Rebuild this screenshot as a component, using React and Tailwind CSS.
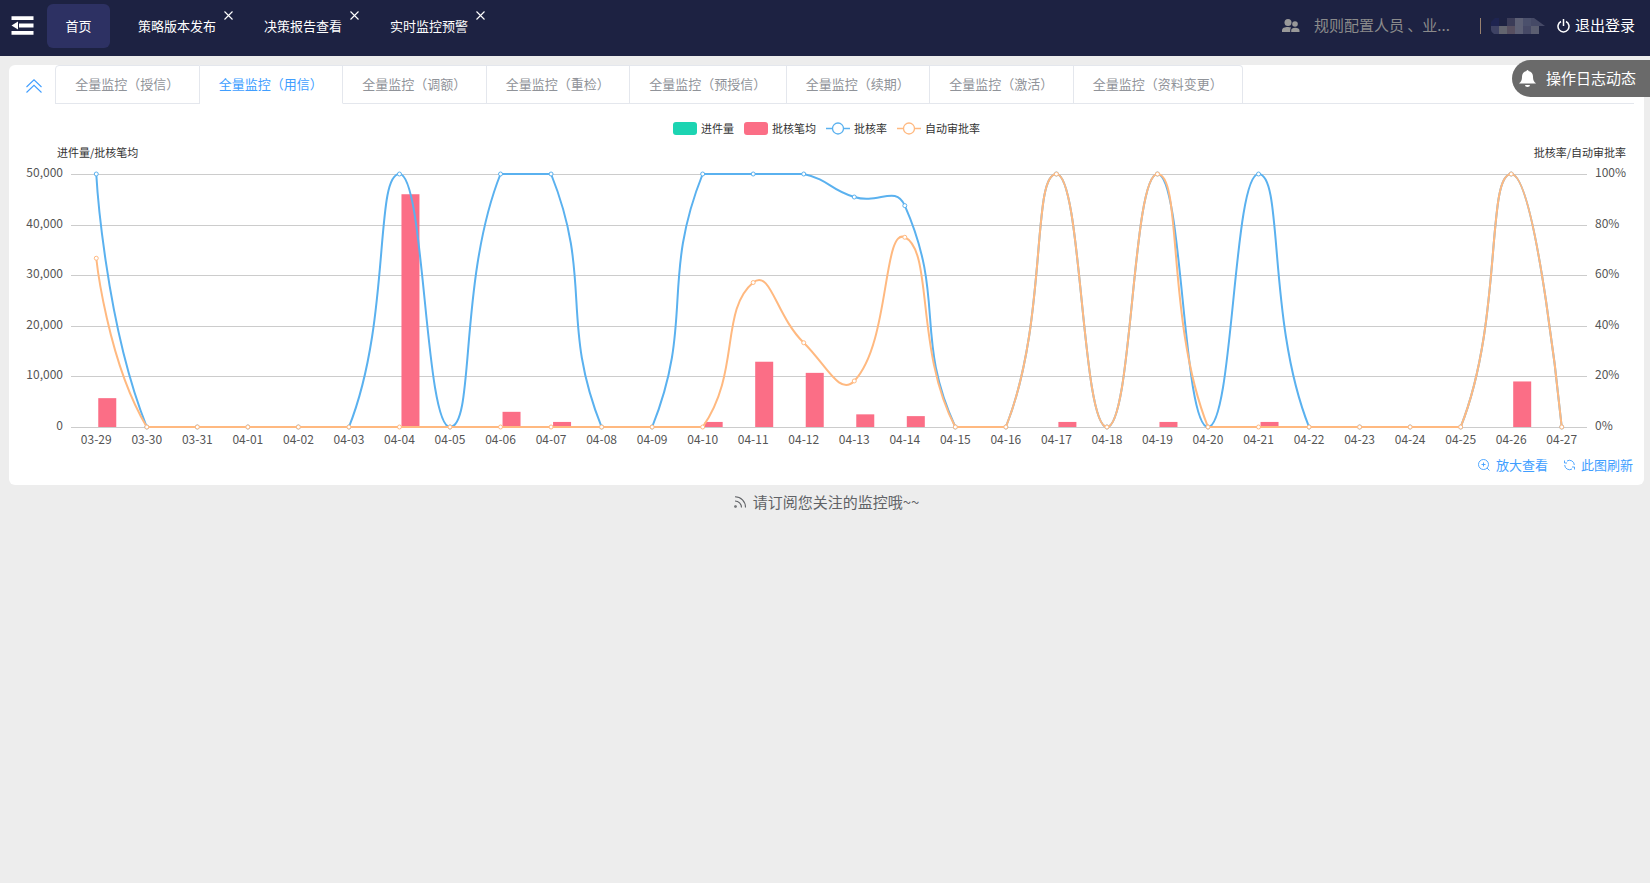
import React, { useLayoutEffect, useRef, useState } from "react";

const openTabs = ["策略版本发布", "决策报告查看", "实时监控预警"];
const monitorTabs = [
  "全量监控（授信）",
  "全量监控（用信）",
  "全量监控（调额）",
  "全量监控（重检）",
  "全量监控（预授信）",
  "全量监控（续期）",
  "全量监控（激活）",
  "全量监控（资料变更）",
];

const dates = [
  "03-29", "03-30", "03-31", "04-01", "04-02", "04-03", "04-04", "04-05", "04-06", "04-07",
  "04-08", "04-09", "04-10", "04-11", "04-12", "04-13", "04-14", "04-15", "04-16", "04-17",
  "04-18", "04-19", "04-20", "04-21", "04-22", "04-23", "04-24", "04-25", "04-26", "04-27",
];
const average = [
  5700, 0, 0, 0, 0, 0, 46000, 0, 3000, 1000,
  0, 0, 1000, 12900, 10700, 2500, 2150, 0, 0, 1000,
  0, 1000, 0, 1000, 0, 0, 0, 0, 9000, 0,
];
const approval = [
  100, 0, 0, 0, 0, 0, 100, 0, 100, 100,
  0, 0, 100, 100, 100, 90.9, 87.5, 0, 0, 100,
  0, 100, 0, 100, 0, 0, 0, 0, 100, 0,
];
const autoApproval = [
  66.7, 0, 0, 0, 0, 0, 0, 0, 0, 0,
  0, 0, 0, 57.1, 33.3, 18.2, 75, 0, 0, 100,
  0, 100, 0, 0, 0, 0, 0, 0, 100, 0,
];

const TOP = 70;
const BOTTOM = 323;
const LEFT = 62;
const RIGHT = 57;

function smoothPath(points) {
  const clamp = ([x, y]) => [
    Math.min(Math.max(x, points[0][0]), points[points.length - 1][0]),
    Math.min(Math.max(y, TOP), BOTTOM),
  ];
  let d = `M${points[0][0]} ${points[0][1]}`;
  let cp0 = points[0];
  for (let i = 1; i < points.length; i++) {
    const prev = points[i - 1];
    const p = points[i];
    const next = points[i + 1];
    let cp1 = p;
    let nextCp = p;
    if (next) {
      const v = [next[0] - prev[0], next[1] - prev[1]];
      const lenPrev = Math.hypot(p[0] - prev[0], p[1] - prev[1]);
      const lenNext = Math.hypot(next[0] - p[0], next[1] - p[1]);
      const ratio = lenNext / (lenNext + lenPrev);
      const back = 0.5 * (1 - ratio);
      cp1 = [p[0] - v[0] * back, p[1] - v[1] * back];
      nextCp = [p[0] + v[0] * 0.5 * ratio, p[1] + v[1] * 0.5 * ratio];
    }
    const a = clamp(cp0);
    const b = clamp(cp1);
    d += `C${a[0]} ${a[1]} ${b[0]} ${b[1]} ${p[0]} ${p[1]}`;
    cp0 = nextCp;
  }
  return d;
}

function RateLine({ values, xAt, color }) {
  const points = values.map((v, i) => [xAt(i), BOTTOM - (v / 100) * (BOTTOM - TOP)]);
  return (
    <g stroke={color}>
      <path d={smoothPath(points)} fill="none" strokeWidth="2" strokeLinejoin="bevel" />
      {points.map(([x, y], i) => (
        <circle key={dates[i]} cx={x} cy={y} r="2" fill="#fff" strokeWidth="1" />
      ))}
    </g>
  );
}

function Chart() {
  const box = useRef(null);
  const [width, setWidth] = useState(1635);
  useLayoutEffect(() => {
    const measure = () => setWidth(box.current.clientWidth);
    measure();
    const observer = new ResizeObserver(measure);
    observer.observe(box.current);
    return () => observer.disconnect();
  }, []);

  const right = width - RIGHT;
  const step = (right - LEFT) / dates.length;
  const xAt = (i) => LEFT + step * (i + 0.5);
  const rows = [0, 1, 2, 3, 4, 5];

  return (
    <div ref={box} className="h-[348px] w-full overflow-hidden">
      <svg width={width} height="348" className="block text-[12px]" role="img" aria-label="全量监控（用信）">
        {rows.map((r) => {
          const y = Math.round(BOTTOM - (r * (BOTTOM - TOP)) / 5);
          return (
            <g key={r} fill="#555">
              <line x1={LEFT} x2={right} y1={y + 0.5} y2={y + 0.5} stroke="#ccc" />
              <text x={LEFT - 8} y={y + 3} textAnchor="end">{(r * 10000).toLocaleString("en-US")}</text>
              <text x={right + 8} y={y + 3}>{r * 20}%</text>
            </g>
          );
        })}
        <g fill="#333" className="text-[11px]">
          <text x={LEFT - 14} y="53">进件量/批核笔均</text>
          <text x={right + 39} y="53" textAnchor="end">批核率/自动审批率</text>
        </g>
        {average.map((v, i) => {
          const h = (v / 50000) * (BOTTOM - TOP);
          return v > 0 && (
            <rect key={dates[i]} x={xAt(i) + 2} y={BOTTOM - h} width="18" height={h} fill="#fb6e86" />
          );
        })}
        <RateLine values={approval} xAt={xAt} color="#5ab1ef" />
        <RateLine values={autoApproval} xAt={xAt} color="#ffb980" />
        <g fill="#555">
          {dates.map((d, i) => (
            <text key={d} x={xAt(i)} y="340" textAnchor="middle">{d}</text>
          ))}
        </g>
      </svg>
    </div>
  );
}

function LegendItem({ color, label, line }) {
  return (
    <span className="flex items-center gap-1">
      <svg width="24" height="14" aria-hidden="true">
        {line ? (
          <g stroke={color} fill="#fff">
            <path d="M0 7.5H24" strokeWidth="1.5" />
            <circle cx="12" cy="7.5" r="5.5" strokeWidth="1.3" />
          </g>
        ) : (
          <rect y="1" width="24" height="13" rx="3" fill={color} />
        )}
      </svg>
      {label}
    </span>
  );
}

export default function App() {
  return (
    <div className="min-h-screen bg-[#ededed] font-['Noto_Sans_CJK_SC',sans-serif] text-[13px]">
      <header className="flex h-14 items-start justify-between bg-[#1d2242] text-white">
        <div className="flex items-start">
          <button aria-label="收起菜单" className="mt-4 ml-[11px]">
            <svg width="23" height="19" fill="#fff" aria-hidden="true">
              <path d="M.5 .2H22.500V4H.5ZM8 7.500H22.500V11.500H8ZM.5 15H22.500V18.800H.5ZM.5 9.500L7 5.500V13.500Z" />
            </svg>
          </button>
          <nav className="ml-[13px] flex">
            <a href="#home" className="mt-1 mr-1 flex h-11 w-[63px] items-center justify-center rounded-md bg-[#2d3163] pb-px">首页</a>
            {openTabs.map((t) => (
              <div key={t} className="relative flex h-13 items-center px-6">
                <a href={"#" + t}>{t}</a>
                <button aria-label={"关闭" + t} className="absolute top-[11px] right-[7px]">
                  <svg width="9" height="9" stroke="#fff" strokeWidth="1.1" aria-hidden="true">
                    <path d="M.5 .5L8.500 8.500M8.500 .5L.5 8.500" />
                  </svg>
                </button>
              </div>
            ))}
          </nav>
        </div>
        <div className="flex h-[51px] items-center pr-[15px] text-[15px]">
          <svg width="18" height="14" fill="#999" aria-hidden="true" className="mr-3.5">
            <circle cx="6" cy="3.600" r="3.500" />
            <circle cx="13" cy="5" r="2.800" />
            <path d="M0 13V11.500C0 9 2.500 8 6 8c1.200 0 2.300.2 3.200.5C8.500 9.300 8.200 10.300 8.200 11.500V13ZM9.200 13V11.500C9.200 9.700 10.600 8.800 13.200 8.800c2.600 0 4.300.9 4.300 2.700V13Z" />
          </svg>
          <span className="w-[166px] text-[#8b8b8b]">规则配置人员 、业...</span>
          <span className="mr-2.5 h-4 w-px bg-[#99816f]" />
          <svg width="54" height="16" aria-hidden="true" className="mr-3">
            <path d="M4 0H8V8H0V4Z" fill="#1e2450" />
            <path d="M0 8H8V16H3Q0 14 0 12Z" fill="#3e4263" />
            <path d="M8 8h8v8H8z" fill="#63656f" />
            <path d="M16 0h8v8h-8z" fill="#3b3c58" />
            <path d="M16 8h8v8h-8z" fill="#574f60" />
            <path d="M24 0h8v16h-8z" fill="#5d6075" />
            <path d="M32 0h8v8h-8z" fill="#4b506c" />
            <path d="M32 8h8v8h-8z" fill="#464966" />
            <path d="M40 0H43L54 8H40Z" fill="#454966" />
            <path d="M40 8h8v8h-8z" fill="#5b5e71" />
          </svg>
          <button className="flex items-center gap-[5px]">
            <svg width="13" height="14" fill="none" stroke="#fff" strokeWidth="1.5" aria-hidden="true">
              <path d="M4 2.500a5.500 5.500 0 1 0 5 0M6.500 0V7" />
            </svg>
            退出登录
          </button>
        </div>
      </header>

      <main className="pt-[9px] pr-1.5 pl-[9px]">
        <section className="rounded-md bg-white pb-[7px]">
          <div className="flex pr-2.5">
            <button aria-label="收起" className="flex w-[46px] items-center justify-center pt-0.5 pl-1">
              <svg width="16" height="14" fill="none" stroke="#409eff" strokeWidth="1.1" aria-hidden="true">
                <path d="M.5 8L8 .8L15.500 8M.5 13.500L8 6.300L15.500 13.500" />
              </svg>
            </button>
            <div className="flex-1 border-b border-[#e4e7ed]">
              <div role="tablist" className="-mb-px flex w-[1188px]">
                {monitorTabs.map((t, i) => (
                  <button
                    key={t}
                    role="tab"
                    aria-selected={i === 1}
                    className={
                      "h-[39px] flex-auto border-t border-r border-b border-[#e4e7ed] px-[18px] pb-0.5 whitespace-nowrap first:rounded-tl-sm first:border-l last:rounded-tr-sm " +
                      (i === 1 ? "border-b-white text-[#409eff]" : "text-[#909399]")
                    }
                  >
                    {t}
                  </button>
                ))}
              </div>
            </div>
          </div>
          <div className="relative">
            <div className="absolute inset-x-0 top-[17px] flex justify-center gap-2.5 text-[11px] leading-[14px] text-[#333]">
              <LegendItem color="#1cd4b2" label="进件量" />
              <LegendItem color="#fb6e86" label="批核笔均" />
              <LegendItem color="#5ab1ef" label="批核率" line />
              <LegendItem color="#ffb980" label="自动审批率" line />
            </div>
            <Chart />
          </div>
          <div className="flex h-[26px] items-center justify-end gap-4 pr-[11px] text-[#409eff]">
            <button className="flex items-center gap-1.5">
              <svg width="12" height="12" fill="none" stroke="currentColor" strokeWidth=".9" aria-hidden="true">
                <circle cx="5.500" cy="5.500" r="5" />
                <path d="M9 9L11.500 11.500M3.500 5.500H7.500M5.500 3.500V7.500" />
              </svg>
              放大查看
            </button>
            <button className="flex items-center gap-1.5">
              <svg width="11" height="12" fill="none" stroke="currentColor" strokeWidth=".9" aria-hidden="true">
                <path d="M3 2A4.800 4.800 0 0 1 10.300 6M.5 1.500V4H3M8 10A4.800 4.800 0 0 1 .7 6M10.500 10.500V8H8" />
              </svg>
              此图刷新
            </button>
          </div>
        </section>
        <p className="flex items-center justify-center gap-1.5 pt-1.5 text-[15px] text-[#606266]">
          <svg width="13" height="12" fill="none" stroke="currentColor" strokeWidth="1.1" aria-hidden="true">
            <path d="M1 .8A10.500 10.500 0 0 1 11.500 11.500M1 5A6.500 6.500 0 0 1 7.500 11.500" />
            <circle cx="1.500" cy="10.500" r=".8" />
          </svg>
          请订阅您关注的监控哦~~
        </p>
      </main>

      <button className="fixed top-[60px] right-0 flex h-[37px] items-center gap-2.5 rounded-l-full bg-[#6a6a6a] pr-3.5 pl-[7px] text-[15px] text-white">
        <svg width="17" height="17" fill="#fff" aria-hidden="true">
          <path d="M7.500 1a1 1 0 0 1 2 0C12.500 1.500 14 4 14 6.500C14 10.500 15 11.500 17 13.500H0C2 11.500 3 10.500 3 6.500C3 4 4.500 1.500 7.500 1ZM6 15H11a2.500 2 0 0 1-5 0Z" />
        </svg>
        操作日志动态
      </button>
    </div>
  );
}
